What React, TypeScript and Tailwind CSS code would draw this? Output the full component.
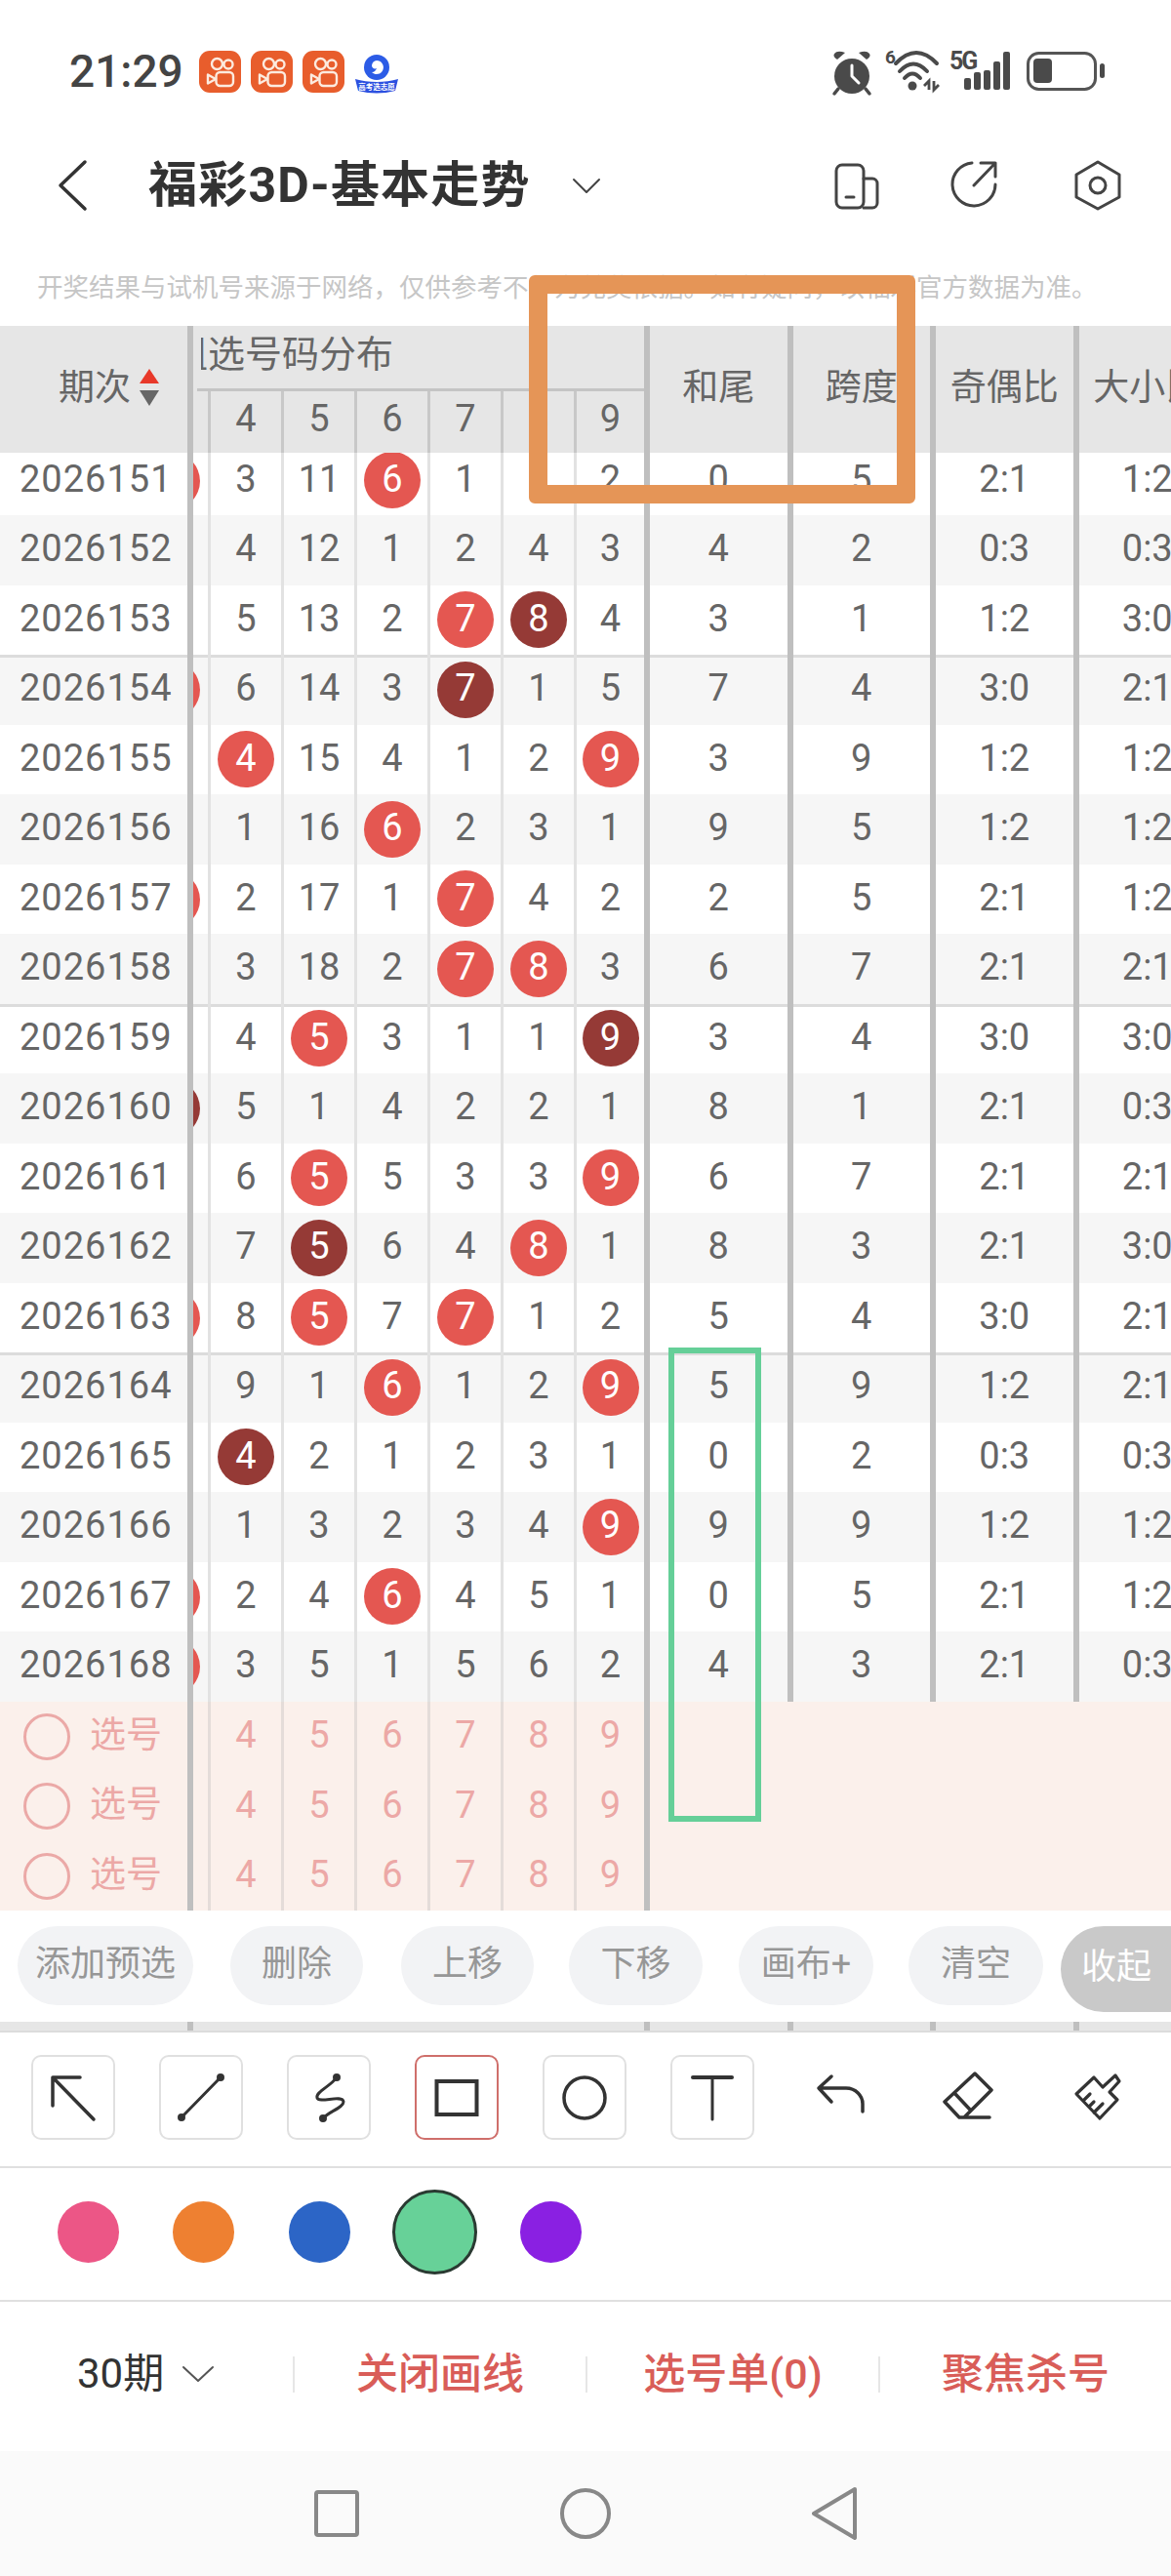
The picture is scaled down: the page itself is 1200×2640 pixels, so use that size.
import { clsx } from 'clsx';

type EdgeBall = '' | 'r' | 'd';

interface RowData {
  issue: string;
  edge: EdgeBall;
  nums: string[];
  rest: string[];
}

const rows: RowData[] = [
  { issue: '2026151', edge: 'r', nums: ['3', '11', '6r', '1', '1', '2'], rest: ['0', '5', '2:1', '1:2'] },
  { issue: '2026152', edge: '', nums: ['4', '12', '1', '2', '4', '3'], rest: ['4', '2', '0:3', '0:3'] },
  { issue: '2026153', edge: '', nums: ['5', '13', '2', '7r', '8d', '4'], rest: ['3', '1', '1:2', '3:0'] },
  { issue: '2026154', edge: 'r', nums: ['6', '14', '3', '7d', '1', '5'], rest: ['7', '4', '3:0', '2:1'] },
  { issue: '2026155', edge: '', nums: ['4r', '15', '4', '1', '2', '9r'], rest: ['3', '9', '1:2', '1:2'] },
  { issue: '2026156', edge: '', nums: ['1', '16', '6r', '2', '3', '1'], rest: ['9', '5', '1:2', '1:2'] },
  { issue: '2026157', edge: 'r', nums: ['2', '17', '1', '7r', '4', '2'], rest: ['2', '5', '2:1', '1:2'] },
  { issue: '2026158', edge: '', nums: ['3', '18', '2', '7r', '8r', '3'], rest: ['6', '7', '2:1', '2:1'] },
  { issue: '2026159', edge: '', nums: ['4', '5r', '3', '1', '1', '9d'], rest: ['3', '4', '3:0', '3:0'] },
  { issue: '2026160', edge: 'd', nums: ['5', '1', '4', '2', '2', '1'], rest: ['8', '1', '2:1', '0:3'] },
  { issue: '2026161', edge: '', nums: ['6', '5r', '5', '3', '3', '9r'], rest: ['6', '7', '2:1', '2:1'] },
  { issue: '2026162', edge: '', nums: ['7', '5d', '6', '4', '8r', '1'], rest: ['8', '3', '2:1', '3:0'] },
  { issue: '2026163', edge: 'r', nums: ['8', '5r', '7', '7r', '1', '2'], rest: ['5', '4', '3:0', '2:1'] },
  { issue: '2026164', edge: '', nums: ['9', '1', '6r', '1', '2', '9r'], rest: ['5', '9', '1:2', '2:1'] },
  { issue: '2026165', edge: '', nums: ['4d', '2', '1', '2', '3', '1'], rest: ['0', '2', '0:3', '0:3'] },
  { issue: '2026166', edge: '', nums: ['1', '3', '2', '3', '4', '9r'], rest: ['9', '9', '1:2', '1:2'] },
  { issue: '2026167', edge: 'r', nums: ['2', '4', '6r', '4', '5', '1'], rest: ['0', '5', '2:1', '1:2'] },
  { issue: '2026168', edge: 'r', nums: ['3', '5', '1', '5', '6', '2'], rest: ['4', '3', '2:1', '0:3'] },
];

const digits = ['4', '5', '6', '7', '8', '9'];
const restHeaders = ['和尾', '跨度', '奇偶比', '大小比'];

const actions = [
  { label: '添加预选', width: 'w-[180px]', margin: 'ml-[18px]' },
  { label: '删除', width: 'w-[136px]', margin: 'ml-[38px]' },
  { label: '上移', width: 'w-[136px]', margin: 'ml-[39px]' },
  { label: '下移', width: 'w-[137px]', margin: 'ml-[36px]' },
  { label: '画布+', width: 'w-[138px]', margin: 'ml-[37px]' },
  { label: '清空', width: 'w-[138px]', margin: 'ml-[36px]' },
];

const swatches = ['bg-[#ec5686]', 'bg-[#ee8031]', 'bg-[#2c65c6]', 'bg-[#67d198]', 'bg-[#8a20e2]'];

function Ball({ value, dark }: { value: string; dark: boolean }) {
  return (
    <span
      className={clsx(
        'flex h-[58px] w-[58px] items-center justify-center rounded-full pb-[3px] text-white',
        dark ? 'bg-[#953a36]' : 'bg-[#e45751]'
      )}
    >
      {value}
    </span>
  );
}

function NumCell({ value, last }: { value: string; last: boolean }) {
  const kind = value.slice(-1);
  const hasBall = kind === 'r' || kind === 'd';
  return (
    <div
      className={clsx(
        'flex h-full shrink-0 items-center justify-center border-l-[3px] border-[#e2e2e2]',
        last ? 'w-[72px]' : 'w-[75px]'
      )}
    >
      {hasBall ? <Ball value={value.slice(0, -1)} dark={kind === 'd'} /> : <span className="pb-[3px]">{value}</span>}
    </div>
  );
}

function DataRow({ row, index }: { row: RowData; index: number }) {
  return (
    <div
      className={clsx(
        'flex h-[71.5px] items-center',
        index % 2 === 1 ? 'bg-[#f6f6f6]' : 'bg-white',
        index % 5 === 3 && 'shadow-[inset_0_3px_0_#dcdcdc]'
      )}
    >
      <div className="w-[192px] shrink-0 pb-[3px] pl-[20px] tracking-[1px]">{row.issue}</div>
      <div className="relative h-full w-[21px] shrink-0 overflow-hidden border-l-[6px] border-[#bfbfbf]">
        {row.edge && (
          <div className="absolute left-[-51px] top-[7px]">
            <Ball value="" dark={row.edge === 'd'} />
          </div>
        )}
      </div>
      {row.nums.map((n, i) => (
        <NumCell key={i} value={n} last={i === 5} />
      ))}
      {row.rest.map((v, i) => (
        <div
          key={i}
          className="flex h-full w-[146.5px] shrink-0 items-center justify-center border-l-[6px] border-[#bfbfbf] pb-[3px]"
        >
          {v}
        </div>
      ))}
    </div>
  );
}

function PickRow() {
  return (
    <div className="flex h-[71.5px] items-center text-[#eca8a6]">
      <div className="flex w-[192px] shrink-0 items-center pl-[24px]">
        <span className="h-[48px] w-[48px] rounded-full border-[3px] border-[#eba9a7]" />
        <span className="ml-[20px] pb-[3px] text-[37px] leading-none">选号</span>
      </div>
      <div className="h-full w-[21px] shrink-0 border-l-[6px] border-[#bfbfbf]" />
      {digits.map((d, i) => (
        <div
          key={d}
          className={clsx(
            'flex h-full shrink-0 items-center justify-center border-l-[3px] border-[#e4dcd9] pb-[3px]',
            i === 5 ? 'w-[72px]' : 'w-[75px]'
          )}
        >
          {d}
        </div>
      ))}
      <div className="h-full w-[6px] shrink-0 bg-[#bfbfbf]" />
    </div>
  );
}

function StatusLeft() {
  const shows = [0, 1, 2];
  return (
    <div className="flex items-center pl-[71px]">
      <span className="w-[133px] text-[46px] font-medium leading-none text-[#444]">21:29</span>
      {shows.map((i) => (
        <svg key={i} viewBox="0 0 43 43" className="mr-[10px] h-[43px] w-[43px]">
          <rect width="43" height="43" rx="11" fill="#e85d2c" />
          <g fill="none" stroke="#fcebdf" strokeWidth="2.4" strokeLinejoin="round">
            <circle cx="18.5" cy="13.5" r="5.5" />
            <circle cx="30" cy="14" r="4.5" />
            <rect x="17.5" y="22" width="17.5" height="14" rx="4" />
            <path d="M9 24.5 L17 29 L9 33.5 Z" />
          </g>
        </svg>
      ))}
      <svg viewBox="0 0 46 40" className="mt-[6px] h-[40px] w-[46px]">
        <circle cx="23" cy="13" r="13" fill="#2c5ce6" />
        <path d="M23 6 a7 7 0 1 1 -5 12 c3 0 4 -2 5 -4 c-2 1 -5 0 -5 -3 a6 6 0 0 1 5 -5 Z" fill="#fff" />
        <path d="M1 25 C14 29 32 29 45 25 L42 37 Q23 42 4 37 Z" fill="#2c50e0" />
        <text x="23" y="36" textAnchor="middle" fontSize="7.5" fontWeight="700" fill="#fff">
          高考选志愿
        </text>
      </svg>
    </div>
  );
}

function StatusRight() {
  // one drawing, origin at (850,45) of the screen
  return (
    <svg viewBox="0 0 290 56" className="h-[56px] w-[290px]">
      <g fill="#4a4a4a">
        <circle cx="23" cy="33" r="18" />
        <path d="M8 16 L16 9 Q8 6 5 10 Q3 13 8 16 Z" />
        <path d="M38 16 L30 9 Q38 6 41 10 Q43 13 38 16 Z" />
        <path d="M9 46 L5 51 M37 46 L41 51" stroke="#4a4a4a" strokeWidth="3.5" strokeLinecap="round" />
      </g>
      <path d="M23 22 V33 L30 40" fill="none" stroke="#fff" strokeWidth="3" strokeLinecap="round" strokeLinejoin="round" />
      <text x="57" y="20" fontSize="19" fontWeight="700" fill="#4a4a4a">
        6
      </text>
      <g fill="none" stroke="#4a4a4a" strokeLinecap="round" strokeWidth="4">
        <path d="M68 20 Q89 -2 110 20" />
        <path d="M72 28 Q86 13 100 28" />
        <path d="M77 35 Q85 26 93 35" />
      </g>
      <circle cx="85" cy="43" r="4.5" fill="#4a4a4a" />
      <path d="M97 43 L102 38 V47 M107 38 V47 L112 42" fill="none" stroke="#4a4a4a" strokeWidth="2.8" />
      <text x="123" y="26" fontSize="25" fontWeight="700" letterSpacing="-2" fill="#4a4a4a">
        5G
      </text>
      <g fill="#4a4a4a">
        <rect x="138" y="35" width="7" height="12" rx="2" />
        <rect x="148" y="29" width="7" height="18" rx="2" />
        <rect x="158" y="27" width="7" height="20" rx="2" />
        <rect x="168" y="18" width="7" height="29" rx="2" />
        <rect x="178" y="8" width="7" height="39" rx="2" />
      </g>
      <rect x="203.5" y="9.5" width="69" height="37" rx="11" fill="none" stroke="#555" strokeWidth="3" />
      <rect x="209" y="15" width="19" height="25" rx="4" fill="#4a4a4a" />
      <rect x="277" y="20" width="5" height="15" rx="2.5" fill="#4a4a4a" />
    </svg>
  );
}

function ToolBox({ active, children }: { active?: boolean; children: React.ReactNode }) {
  return (
    <div
      className={clsx(
        'flex h-[87px] w-[86px] items-center justify-center rounded-[10px] border-2',
        active ? 'border-[#cf6f6b]' : 'border-[#e0e0e0]'
      )}
    >
      {children}
    </div>
  );
}

const toolIcon = {
  fill: 'none',
  stroke: '#333',
  strokeLinecap: 'round' as const,
  strokeLinejoin: 'round' as const,
  className: 'h-[56px] w-[56px] shrink-0',
  viewBox: '0 0 56 56',
};

const tools = [
  <ToolBox key="arrow">
    <svg {...toolIcon} strokeWidth="3.5">
      <path d="M7 36 V7 H35 M7 7 L49 50" />
    </svg>
  </ToolBox>,
  <ToolBox key="line">
    <svg {...toolIcon} strokeWidth="3">
      <path d="M48 7 L8 48" />
      <circle cx="48" cy="7" r="2.5" fill="#333" />
      <circle cx="8" cy="48" r="2.5" fill="#333" />
    </svg>
  </ToolBox>,
  <ToolBox key="curve">
    <svg {...toolIcon} strokeWidth="3">
      <path d="M36 7 C30 16 14 22 16 28 C18 34 42 24 43 32 C43 38 28 42 22 49" />
      <circle cx="36" cy="7" r="2.5" fill="#333" />
      <circle cx="22" cy="49" r="2.5" fill="#333" />
    </svg>
  </ToolBox>,
  <ToolBox key="rect" active>
    <svg {...toolIcon} strokeWidth="4" strokeLinejoin="miter">
      <rect x="7.5" y="11" width="41" height="34" />
    </svg>
  </ToolBox>,
  <ToolBox key="circle">
    <svg {...toolIcon} strokeWidth="3.5">
      <circle cx="28" cy="28" r="21" />
    </svg>
  </ToolBox>,
  <ToolBox key="text">
    <svg {...toolIcon} strokeWidth="3">
      <path d="M8 7 H48" strokeWidth="4" />
      <path d="M28 7 V50" />
    </svg>
  </ToolBox>,
  <svg key="undo" viewBox="0 0 64 64" fill="none" stroke="#333" strokeWidth="3.5" strokeLinecap="round" strokeLinejoin="round" className="h-[64px] w-[64px]">
    <path d="M23 10 L10 22 L23 36 M10 22 H38 C48 22 55 30 55 38 V46" />
  </svg>,
  <svg key="eraser" viewBox="0 0 66 66" fill="none" stroke="#333" strokeWidth="3.5" strokeLinecap="round" strokeLinejoin="round" className="h-[66px] w-[66px]">
    <path d="M40 8 L57 25 L29 53 H24 L9 37 Z M20 29 L35 45 M24 53 H55" />
  </svg>,
  <svg key="brush" viewBox="0 0 66 66" fill="none" stroke="#333" strokeWidth="3.2" strokeLinecap="round" strokeLinejoin="round" className="h-[66px] w-[66px]">
    <path d="M53 10 L57 16 L47 27 L55 35 L37 54 L13 29 L31 12 L40 22 Z M20 36 L27 29 M26 42 L31 37 M31 48 L40 39" />
  </svg>,
];

export default function App() {
  return (
    <div className="relative h-[2640px] w-[1200px] overflow-hidden bg-white font-[Roboto,'Noto_Sans_CJK_SC',sans-serif]">
      {/* Status bar */}
      <div className="flex h-[146px] items-center justify-between pr-[60px]">
        <StatusLeft />
        <StatusRight />
      </div>

      {/* Title */}
      <div className="flex h-[88px] items-center">
        <svg viewBox="0 0 32 54" fill="none" stroke="#333" strokeWidth="3.5" strokeLinecap="round" strokeLinejoin="round" className="ml-[59px] h-[54px] w-[32px] shrink-0">
          <path d="M28 3 L3 27 L28 51" />
        </svg>
        <span className="ml-[61px] w-[390px] shrink-0 whitespace-nowrap text-[50px] font-bold leading-none tracking-[1.2px] text-[#333]">福彩3D-基本走势</span>
        <svg viewBox="0 0 30 17" fill="none" stroke="#444" strokeWidth="2" strokeLinecap="round" strokeLinejoin="round" className="ml-[44px] h-[17px] w-[30px] shrink-0">
          <path d="M2 2 L15 15 L28 2" />
        </svg>
        <svg viewBox="0 0 50 50" fill="none" stroke="#444" strokeWidth="3" strokeLinecap="round" strokeLinejoin="round" className="ml-[239px] h-[50px] w-[50px] shrink-0">
          <rect x="2" y="4" width="28" height="44" rx="6" />
          <path d="M30 18 H39 A5 5 0 0 1 44 23 V43 A5 5 0 0 1 39 48 H30 M12 37 H20" />
        </svg>
        <svg viewBox="0 0 56 56" fill="none" stroke="#444" strokeWidth="3" strokeLinecap="round" strokeLinejoin="round" className="ml-[65px] h-[56px] w-[56px] shrink-0">
          <path d="M26 5 A22 22 0 1 0 50 27 M28 28 L50 5 M35 5 H50 V19" />
        </svg>
        <svg viewBox="0 0 50 52" fill="none" stroke="#444" strokeWidth="3" strokeLinecap="round" strokeLinejoin="round" className="ml-[74px] h-[52px] w-[50px] shrink-0">
          <path d="M25 2 L47 15 V38 L25 50 L3 38 V15 Z" />
          <circle cx="25" cy="26" r="8" />
        </svg>
      </div>

      {/* Notice */}
      <div className="h-[100px] pl-[38px] pt-[46px] text-[26.5px] leading-[30px] text-[#c6c6c6]">
        开奖结果与试机号来源于网络，仅供参考不作为兑奖依据。如有疑问，以福彩官方数据为准。
      </div>

      {/* Table */}
      <div className="text-[38px] leading-none text-[#666]">
        <div className="relative z-10 flex h-[130px] bg-[#e6e6e6]">
          <div className="flex w-[192px] shrink-0 items-center pb-[4px] pl-[60px] text-[37px]">
            <span>期次</span>
            <svg viewBox="0 0 20 38" className="ml-[9px] h-[38px] w-[20px]">
              <path d="M10 0 L20 15 H0 Z" fill="#e8392a" />
              <path d="M0 22 H20 L10 38 Z" fill="#666" />
            </svg>
          </div>
          <div className="flex w-[468px] shrink-0 flex-col border-l-[6px] border-[#bfbfbf]">
            <div className="ml-[8px] h-[64px] overflow-hidden">
              <div className="ml-[-31px] w-[300px] pt-[10px] text-[38px] leading-[38px]">组选号码分布</div>
            </div>
            <div className="ml-[4px] h-[3px] bg-[#c4c4c4]" />
            <div className="flex flex-1">
              <div className="w-[15px] shrink-0" />
              {digits.map((d, i) => (
                <div
                  key={d}
                  className={clsx(
                    'flex shrink-0 items-center justify-center border-l-[3px] border-[#c8c8c8] pb-[7px]',
                    i === 5 ? 'w-[72px]' : 'w-[75px]'
                  )}
                >
                  {d}
                </div>
              ))}
            </div>
          </div>
          {restHeaders.map((h) => (
            <div
              key={h}
              className="flex w-[146.5px] shrink-0 items-center justify-center whitespace-nowrap border-l-[6px] border-[#bfbfbf] pb-[4px] text-[37px]"
            >
              {h}
            </div>
          ))}
        </div>

        <div className="h-[1280px] overflow-hidden">
          <div className="mt-[-7.5px]">
            {rows.map((row, i) => (
              <DataRow key={row.issue} row={row} index={i} />
            ))}
          </div>
        </div>

        <div className="h-[214px] overflow-hidden bg-[#fbf0eb]">
          <PickRow />
          <PickRow />
          <PickRow />
        </div>
      </div>

      {/* Action buttons */}
      <div className="flex h-[114px] items-start pt-[16px]">
        {actions.map((a) => (
          <div
            key={a.label}
            className={clsx(
              'flex h-[81px] shrink-0 items-center justify-center rounded-full bg-[#f2f3f5] pb-[3px] text-[36px] leading-none text-[#979797]',
              a.width,
              a.margin
            )}
          >
            {a.label}
          </div>
        ))}
        <div className="ml-[18px] flex h-[88px] w-[113px] shrink-0 items-center rounded-l-full bg-[#c9c9c9] pb-[4px] pl-[21px] text-[36px] leading-none text-white">
          收起
        </div>
      </div>

      {/* Table footer strip */}
      <div className="flex h-[11px] border-b-2 border-[#dcdcdc] bg-[#e6e6e6]">
        <div className="w-[192px] shrink-0" />
        <div className="w-[468px] shrink-0 border-l-[6px] border-[#bfbfbf]" />
        <div className="w-[146.5px] shrink-0 border-l-[6px] border-[#bfbfbf]" />
        <div className="w-[146.5px] shrink-0 border-l-[6px] border-[#bfbfbf]" />
        <div className="w-[146.5px] shrink-0 border-l-[6px] border-[#bfbfbf]" />
        <div className="w-[100px] shrink-0 border-l-[6px] border-[#bfbfbf]" />
      </div>

      {/* Drawing tools */}
      <div className="flex h-[139px] items-start border-b-2 border-[#e0e0e0] pl-[9.5px] pt-[23px]">
        {tools.map((tool, i) => (
          <div key={i} className="flex h-[87px] w-[131px] shrink-0 items-center justify-center">
            {tool}
          </div>
        ))}
      </div>

      {/* Colours */}
      <div className="flex h-[137px] items-center border-b-2 border-[#e0e0e0] pb-[4px] pl-[31px]">
        {swatches.map((color, i) => (
          <div key={color} className="flex w-[118.5px] shrink-0 justify-center">
            <span
              className={clsx(
                'rounded-full',
                color,
                i === 3 ? 'h-[87px] w-[87px] border-[3px] border-[#2a3a32]' : 'h-[63px] w-[63px]'
              )}
            />
          </div>
        ))}
      </div>

      {/* Bottom actions */}
      <div className="flex h-[153px] items-center pb-[5px] text-[43px] font-medium leading-none text-[#d95d58]">
        <div className="flex h-[37px] w-[300px] shrink-0 items-center pl-[79px] text-[42px] text-[#333]">
          <span className="font-normal">30期</span>
          <svg viewBox="0 0 34 18" fill="none" stroke="#555" strokeWidth="2" strokeLinecap="round" strokeLinejoin="round" className="ml-[18px] h-[18px] w-[34px]">
            <path d="M2 2 L17 16 L32 2" />
          </svg>
        </div>
        <div className="flex h-[37px] w-[300px] shrink-0 items-center justify-center border-l-2 border-[#e6e6e6]">关闭画线</div>
        <div className="flex h-[37px] w-[300px] shrink-0 items-center justify-center border-l-2 border-[#e6e6e6]">选号单(0)</div>
        <div className="flex h-[37px] w-[300px] shrink-0 items-center justify-center border-l-2 border-[#e6e6e6]">聚焦杀号</div>
      </div>

      {/* System nav */}
      <div className="flex h-[128px] items-center justify-center bg-[#fafafa]">
        <div className="flex w-[255px] justify-center">
          <span className="h-[48px] w-[46px] rounded-[4px] border-[4px] border-[#888]" />
        </div>
        <div className="flex w-[255px] justify-center">
          <span className="h-[52px] w-[52px] rounded-full border-[4px] border-[#888]" />
        </div>
        <div className="flex w-[255px] justify-center">
          <svg viewBox="0 0 46 54" fill="none" stroke="#888" strokeWidth="4" strokeLinejoin="round" className="h-[54px] w-[46px]">
            <path d="M44 2 L2 27 L44 52 Z" />
          </svg>
        </div>
      </div>

      {/* Hand-drawn marks lying over the table */}
      <div className="absolute left-[542px] top-[282px] z-20 h-[234px] w-[396px] rounded-[6px] border-[19px] border-[#e59557]" />
      <div className="absolute left-[685px] top-[1381px] z-20 h-[486px] w-[95px] border-[6px] border-[#65cf98]" />
    </div>
  );
}
